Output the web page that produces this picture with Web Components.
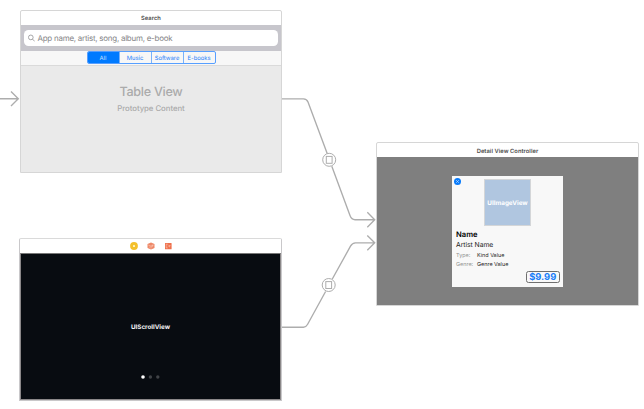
<!DOCTYPE html>
<html lang="en">
<head>
<meta charset="utf-8">
<title>Storyboard</title>
<style>
html,body{margin:0;height:100%;background:#fff;overflow:hidden}
body{font-family:Inter,"Liberation Sans",sans-serif;text-rendering:geometricPrecision}
</style>
</head>
<body>
<story-board></story-board>
<script>
const define = (name, html) => customElements.define(name, class extends HTMLElement {
  constructor() {
    super();
    const t = document.createElement('template');
    t.innerHTML = html;
    this.attachShadow({mode: 'open'}).append(t.content.cloneNode(true));
  }
});

define('segue-lines', `
<style>:host{display:block}svg{display:block}</style>
<svg width="644" height="409" fill="none" stroke="#adadad" stroke-width="1.35">
  <path d="M0 98.7H18M11 91.5L18.3 98.7L11 106"/>
  <path d="M282 98.8H303.5Q306.8 98.8 308 102L327.2 153.5M331.8 166.2L350 215.5Q351.6 219.7 355 219.7H374.5M367.3 212.3L374.7 219.7L367.3 227.2"/>
  <path d="M282 327.2H303.5Q306 327.2 307.5 324.5L325.6 291.5M332.3 279L350.5 246.2Q352.4 242.8 355.5 242.8H374.5M367.3 235.4L374.7 242.8L367.3 250.3"/>
  <g stroke-width="1"><circle cx="329.2" cy="159.8" r="6.5"/><rect x="326.3" y="156.4" width="5.8" height="6.9"/>
  <circle cx="328.7" cy="285" r="6.5"/><rect x="325.8" y="281.6" width="5.8" height="6.9"/></g>
</svg>`);

define('scene-frame', `
<style>
:host{display:flex;flex-direction:column;box-sizing:border-box;border:1px solid #d6d6d6;border-radius:2px 2px 0 0;background:#fff}
header{flex:none;box-sizing:border-box;height:var(--head,14px);padding-top:var(--title-top,1px);display:flex;align-items:center;justify-content:center;font-size:5.75px;font-weight:600;color:#4d4d4d;letter-spacing:.06px;white-space:nowrap}
main{flex:1;min-height:0;display:flex;flex-direction:column}
</style>
<header><slot name="title"></slot></header><main><slot></slot></main>`);

define('search-bar', `
<style>
:host{display:flex;flex:none;height:26px;box-sizing:border-box;padding:4.6px 3.5px 4.6px 3px;background:#c7c6cc}
div{flex:1;display:flex;align-items:center;gap:3px;padding-left:3.5px;background:#fff;border-radius:4.5px;color:#858587;font-size:7.95px;letter-spacing:-.235px;white-space:nowrap}
svg{flex:none}
</style>
<div><svg width="7" height="8" viewBox="0 0 7 8" fill="none" stroke="#929294" stroke-width=".8"><circle cx="2.8" cy="3.4" r="2.35"/><path d="M4.5 5.1L6.7 7.4"/></svg><span><slot></slot></span></div>`);

define('scope-bar', `
<style>
:host{display:flex;flex:none;justify-content:center;height:15px;box-sizing:border-box;padding:.4px 0 .8px;background:#f7f7f7;border-bottom:1px solid #dadada}
div{display:grid;grid-template-columns:31px repeat(3,32px);border:1px solid #579fff;border-radius:2px;overflow:hidden;box-sizing:border-box;width:129px}
span{display:flex;align-items:center;justify-content:center;padding-top:1.5px;font-size:5.85px;letter-spacing:-.03px;color:#2380fa;border-left:1px solid #79b1fb;white-space:nowrap}
span:first-child{background:#007aff;color:#c9e2ff;border:0}
</style>
<div><span>All</span><span>Music</span><span>Software</span><span>E-books</span></div>`);

define('table-placeholder', `
<style>
:host{display:flex;flex:1;flex-direction:column;align-items:center;background:#eaeaea;color:#ababab;white-space:nowrap}
h2,p{margin:0}
h2{margin-top:19px;font-size:12.6px;line-height:16px;font-weight:500;letter-spacing:-.28px}
p{margin-top:1px;font-size:7.8px;line-height:12px;font-weight:500;letter-spacing:-.05px}
</style>
<h2>Table View</h2><p>Prototype Content</p>`);

define('scene-icons', `
<style>:host,svg{display:block}</style>
<svg width="42" height="8" viewBox="0 0 42 8">
  <circle cx="4" cy="4" r="3.9" fill="#f3c02b"/><rect x="3" y="3" width="2" height="2" rx=".4" fill="#fff4c6"/>
  <path d="M21 .6L24.5 2V5.9L21 7.5L17.5 5.9V2Z" fill="#ee8867"/><path d="M18.2 3L21 4.1V6.5M21 4.1L23.8 3M19.5 4.6V5.5M22.3 2.5V5" stroke="#fbd2c6" stroke-width=".5" fill="none"/>
  <rect x="35" y=".9" width="6.6" height="6.4" rx=".4" fill="#ee704b"/><path d="M37.8 2.2H36.2V5.9H37.8M37.6 4H40M39.1 2.8L40.3 4L39.1 5.2" stroke="#ffd5c8" stroke-width=".55" fill="none"/>
</svg>`);

define('scroll-placeholder', `
<style>
:host{display:flex;flex:1;flex-direction:column;align-items:center;background:#080c11;color:#f5f5f5;border:1px solid #8b8889;border-top-color:#777}
b{margin-top:68px;font-size:6.25px;line-height:10px;font-weight:700}
svg{display:block;margin-top:42.5px}
</style>
<b>UIScrollView</b>
<svg width="19" height="4" viewBox="0 0 19 4"><circle cx="2" cy="2" r="1.8" fill="#fff"/><circle cx="9.4" cy="2" r="1.7" fill="#404347"/><circle cx="16.8" cy="2" r="1.7" fill="#404347"/></svg>`);

define('detail-card', `
<style>
:host{display:flex;flex-direction:column;position:relative;box-sizing:border-box;width:111px;height:111px;background:#f8f8f8;color:#000;white-space:nowrap}
svg{position:absolute;left:2px;top:2.5px}
.art{align-self:center;flex:none;box-sizing:border-box;width:47px;height:47px;margin-top:3.5px;border:1.2px solid #d4d6d8;background:#b0c6e0;color:#fff;display:flex;align-items:center;justify-content:center;font-size:6.3px;font-weight:700}
.name{margin:2.5px 0 0 4px;font-size:7.6px;line-height:11px;font-weight:600}
.artist{margin:.5px 0 0 4px;font-size:6.8px;line-height:10px;color:#1c1c1c;letter-spacing:-.05px}
dl{display:grid;grid-template-columns:21px auto;grid-auto-rows:8.7px;margin:2.2px 0 0 4px;font-size:5.45px;line-height:8.7px}
dt{color:#929292}dd{margin:0;color:#222}
.price{align-self:flex-end;box-sizing:border-box;width:34px;height:12px;margin:1.3px 3.3px 0 0;padding-top:2.4px;border:1px solid #6f6f6f;border-radius:2.5px;color:#187ef8;font-size:9.4px;line-height:10px;font-weight:700;display:flex;align-items:center;justify-content:center}
</style>
<svg width="7" height="7" viewBox="0 0 7 7"><circle cx="3.5" cy="3.5" r="3.5" fill="#087bfb"/><path d="M2.1 2.1L4.9 4.9M4.9 2.1L2.1 4.9" stroke="#c8e0ff" stroke-width=".65"/></svg>
<div class="art"><span>UIImageView</span></div>
<div class="name"><span>Name</span></div><div class="artist"><span>Artist Name</span></div>
<dl><dt>Type:</dt><dd>Kind Value</dd><dt>Genre:</dt><dd>Genre Value</dd></dl>
<div class="price"><span>$9.99</span></div>`);

define('detail-stage', `
<style>:host{display:flex;flex:1;justify-content:center;align-items:flex-start;background:#7f7f7f;padding-top:18.6px}</style><slot></slot>`);

define('story-board', `
<style>
:host{display:block;position:relative;width:644px;height:409px;overflow:hidden;background:#fff}
segue-lines{position:absolute;inset:0}
scene-frame{position:absolute}
.search{left:20px;top:10px;width:262px;height:163px}
.scroll{left:19px;top:238px;width:263px;height:163px;--title-top:0px;border-color:#c9c8ca;border-top-color:#dadada}
.detail{left:376px;top:142px;width:263px;height:164px;--title-top:2.5px}
</style>
<segue-lines></segue-lines>
<scene-frame class="search"><span slot="title">Search</span><search-bar>App name, artist, song, album, e-book</search-bar><scope-bar></scope-bar><table-placeholder></table-placeholder></scene-frame>
<scene-frame class="scroll"><scene-icons slot="title"></scene-icons><scroll-placeholder></scroll-placeholder></scene-frame>
<scene-frame class="detail"><span slot="title">Detail View Controller</span><detail-stage><detail-card></detail-card></detail-stage></scene-frame>`);
</script>
</body>
</html>
